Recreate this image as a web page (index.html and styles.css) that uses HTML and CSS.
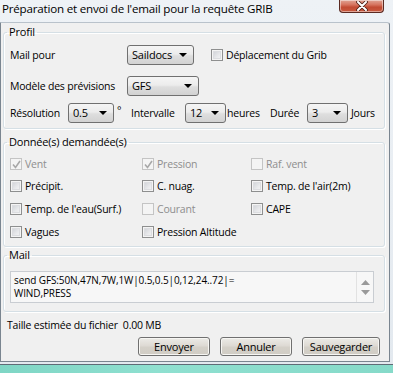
FILE: index.html
```html
<!DOCTYPE html>
<html lang="fr">
<head>
<meta charset="utf-8">
<title>GRIB</title>
<link rel="stylesheet" href="styles.css">
</head>
<body>
<div class="screen">
  <div class="window">
    <div class="titlebar">
      <span class="title">Préparation et envoi de l'email pour la requête GRIB</span>
      <span class="close">
        <svg width="14" height="10" viewBox="0 0 14 10"><path d="M3 1 L11 9 M11 1 L3 9" stroke="#4a1d14" stroke-width="3.6" stroke-linecap="round"/><path d="M3 1 L11 9 M11 1 L3 9" stroke="#fff" stroke-width="2" stroke-linecap="round"/></svg>
      </span>
    </div>
    <div class="client">
      <fieldset class="group profil">
        <legend>Profil</legend>
        <div class="prow prow1">
          <span class="plabel">Mail pour</span>
          <span class="combo c-sail">Saildocs<i class="arrow"></i></span>
          <span class="check deplace"><span class="box"></span>Déplacement du Grib</span>
        </div>
        <div class="prow prow2">
          <span class="plabel">Modèle des prévisions</span>
          <span class="combo c-gfs">GFS<i class="arrow"></i></span>
        </div>
        <div class="prow prow3">
          <span class="l-res">Résolution</span>
          <span class="combo c-res">0.5<i class="arrow"></i></span>
          <span class="l-deg">°</span>
          <span class="l-int">Intervalle</span>
          <span class="combo c-small">12<i class="arrow"></i></span>
          <span class="l-heu">heures</span>
          <span class="l-dur">Durée</span>
          <span class="combo c-small">3<i class="arrow"></i></span>
          <span class="l-jou">Jours</span>
        </div>
      </fieldset>

      <fieldset class="group donnees">
        <legend>Donnée(s) demandée(s)</legend>
        <div class="grid">
          <span class="check dis"><span class="box checked"><svg width="9" height="9" viewBox="0 0 9 9"><path d="M1 4.5 L3.5 7.5 L8 1" fill="none" stroke="#a8a8a8" stroke-width="1.6"/></svg></span>Vent</span>
          <span class="check dis"><span class="box checked"><svg width="9" height="9" viewBox="0 0 9 9"><path d="M1 4.5 L3.5 7.5 L8 1" fill="none" stroke="#a8a8a8" stroke-width="1.6"/></svg></span>Pression</span>
          <span class="check dis"><span class="box empty"></span>Raf. vent</span>

          <span class="check"><span class="box"></span>Précipit.</span>
          <span class="check"><span class="box"></span>C. nuag.</span>
          <span class="check"><span class="box"></span>Temp. de l'air(2m)</span>

          <span class="check"><span class="box"></span>Temp. de l'eau(Surf.)</span>
          <span class="check dis"><span class="box empty"></span>Courant</span>
          <span class="check"><span class="box"></span>CAPE</span>

          <span class="check"><span class="box"></span>Vagues</span>
          <span class="check"><span class="box"></span>Pression Altitude</span>
          <span></span>
        </div>
      </fieldset>

      <fieldset class="group mail">
        <legend>Mail</legend>
        <div class="textarea">
          <div class="text"><div class="tl">send GFS:50N,47N,7W,1W|0.5,0.5|0,12,24..72|=</div><div class="tl">WIND,PRESS</div></div>
          <div class="scroll">
            <svg width="9" height="5" viewBox="0 0 9 5"><path d="M0 5 L4.5 0 L9 5 Z" fill="#9a9a9a"/></svg>
            <svg width="9" height="5" viewBox="0 0 9 5"><path d="M0 0 L4.5 5 L9 0 Z" fill="#9a9a9a"/></svg>
          </div>
        </div>
      </fieldset>

      <div class="size">Taille estimée du fichier&nbsp; 0.00 MB</div>

      <div class="buttons">
        <span class="btn b-env">Envoyer</span>
        <span class="btn b-ann">Annuler</span>
        <span class="btn b-sav">Sauvegarder</span>
      </div>
    </div>
  </div>
  <div class="map"></div>
</div>
</body>
</html>
```

FILE: styles.css
```css
* { box-sizing: border-box; }
html, body { margin: 0; padding: 0; }
body {
  width: 393px;
  height: 373px;
  overflow: hidden;
  font-family: "Open Sans", "Noto Sans", sans-serif;
  font-size: 10.5px;
  letter-spacing: -0.2px;
  color: #000;
  background: #8fdccd;
}
.screen { width: 393px; height: 373px; display: flex; flex-direction: column; }
.window {
  width: 393px;
  height: 365px;
  background: linear-gradient(#eef2f6, #e3e9ef);
  display: flex;
  flex-direction: column;
  border-bottom: 1px solid #5f6b76;
}
.map {
  flex: 1;
  background: linear-gradient(90deg, #7fd6c5 0, #8fe0d0 40%, #86dac9 100%);
}
.titlebar {
  height: 22px;
  display: flex;
  align-items: flex-start;
}
.title {
  font-size: 11.6px;
  line-height: 16px;
  padding: 1px 0 0 2px;
  white-space: nowrap;
  letter-spacing: -0.2px;
}
.close {
  margin-left: auto;
  margin-right: 9px;
  width: 45px;
  height: 13px;
  border: 1px solid #5a2a22;
  border-top: none;
  border-radius: 0 0 4px 4px;
  background: linear-gradient(#e0a595 0, #d6735e 40%, #c24b33 60%, #c95a3f 100%);
  box-shadow: inset 0 0 0 1px rgba(255,255,255,0.45);
  display: flex;
  align-items: center;
  justify-content: center;
}
.close svg { display: block; margin-top: -1px; }
.client {
  width: 390px;
  height: 340px;
  background: #f0f0f0;
  border: 1px solid #7a8590;
  border-top-color: #b9c2cb;
  border-radius: 0 3px 0 0;
  padding: 2px 4px 0 2px;
  display: flex;
  flex-direction: column;
}
.group {
  margin: 0;
  padding: 0 6px;
  border: 1px solid #d5dfe5;
  border-radius: 3px;
  box-shadow: 1px 1px 0 #fff, inset 1px 1px 0 #fff;
  min-width: 0;
}
.group legend {
  font-size: 11px;
  line-height: 14px;
  padding: 0 2px;
  margin-left: -3px;
}
/* Profil */
.profil { padding-top: 6px; padding-bottom: 5px; display: flex; flex-direction: column; }
.prow { display: flex; align-items: center; height: 20px; white-space: nowrap; }
.prow2 { margin-top: 11px; }
.prow3 { margin-top: 7px; }
.plabel { width: 117px; flex: none; }
.combo {
  position: relative;
  height: 20px;
  flex: none;
  border: 1px solid #707070;
  border-radius: 3px;
  background: linear-gradient(#f5f5f5 0, #ececec 45%, #dedede 55%, #d2d2d2 100%);
  padding-left: 4px;
  line-height: 18px;
  font-size: 11px;
}
.arrow {
  position: absolute;
  right: 6px;
  top: 7px;
  width: 0;
  height: 0;
  border-left: 4px solid transparent;
  border-right: 4px solid transparent;
  border-top: 4px solid #000;
}
.c-sail { width: 67px; }
.c-gfs { width: 72px; }
.c-res { width: 46px; }
.c-small { width: 41px; }
.deplace { margin-left: 17px; }
.l-res { width: 58px; flex: none; }
.l-deg { width: 17px; flex: none; padding-left: 3px; align-self: flex-start; line-height: 14px; }
.l-int { width: 54px; flex: none; }
.l-heu { width: 44px; flex: none; padding-left: 1px; }
.l-dur { width: 37px; flex: none; }
.l-jou { padding-left: 3px; }

/* checkbox */
.check { display: flex; align-items: center; white-space: nowrap; }
.box {
  width: 12px;
  height: 12px;
  flex: none;
  margin-right: 3px;
  border: 1px solid #8e8f8f;
  background: linear-gradient(135deg, #c9ccd1 0, #e9eaec 60%, #f6f6f6 100%);
  box-shadow: inset 0 0 0 1px #f4f4f4, inset 0 0 0 2px #dcdde0;
  display: flex;
  align-items: center;
  justify-content: center;
}
.box.checked, .box.empty {
  border-color: #c4c4c4;
  background: #f4f4f4;
  box-shadow: none;
}
.dis { color: #8e8e8e; }

/* Données */
.donnees { margin-top: 6px; padding-top: 5px; padding-bottom: 3px; }
.grid {
  display: grid;
  grid-template-columns: 132px 109px auto;
  grid-template-rows: 20px 23px 23px 23px;
  align-items: center;
}

/* Mail */
.mail { margin-top: 1px; padding: 9px 4px 8px 6px; }
.textarea {
  height: 32px;
  width: 364px;
  border: 1px solid #c9cdd2;
  background: #f7f7f7;
  display: flex;
}
.text {
  flex: 1;
  padding: 2px 0 0 3px;
  font-size: 10px;
  letter-spacing: -0.1px;
  white-space: nowrap;
}
.tl { height: 13px; line-height: 13px; }
.scroll {
  width: 17px;
  border-left: 1px solid #e2e2e2;
  display: flex;
  flex-direction: column;
  align-items: center;
  justify-content: space-around;
  padding: 5px 0 4px;
}
.scroll svg { display: block; }

.size { margin-top: 6px; padding-left: 4px; line-height: 14px; }
.buttons {
  margin-top: 5px;
  display: flex;
  justify-content: flex-end;
  gap: 10px;
  padding-right: 5px;
}
.btn {
  height: 19px;
  border: 1px solid #707070;
  border-radius: 3px;
  background: linear-gradient(#ecebe7 0, #dedad4 45%, #d4d0c8 55%, #d0ccc4 100%);
  box-shadow: inset 0 0 0 1px #f7f6f3;
  display: flex;
  align-items: center;
  justify-content: center;
  font-size: 11px;
}
.b-env, .b-ann { width: 72px; }
.b-sav { width: 78px; }
```
